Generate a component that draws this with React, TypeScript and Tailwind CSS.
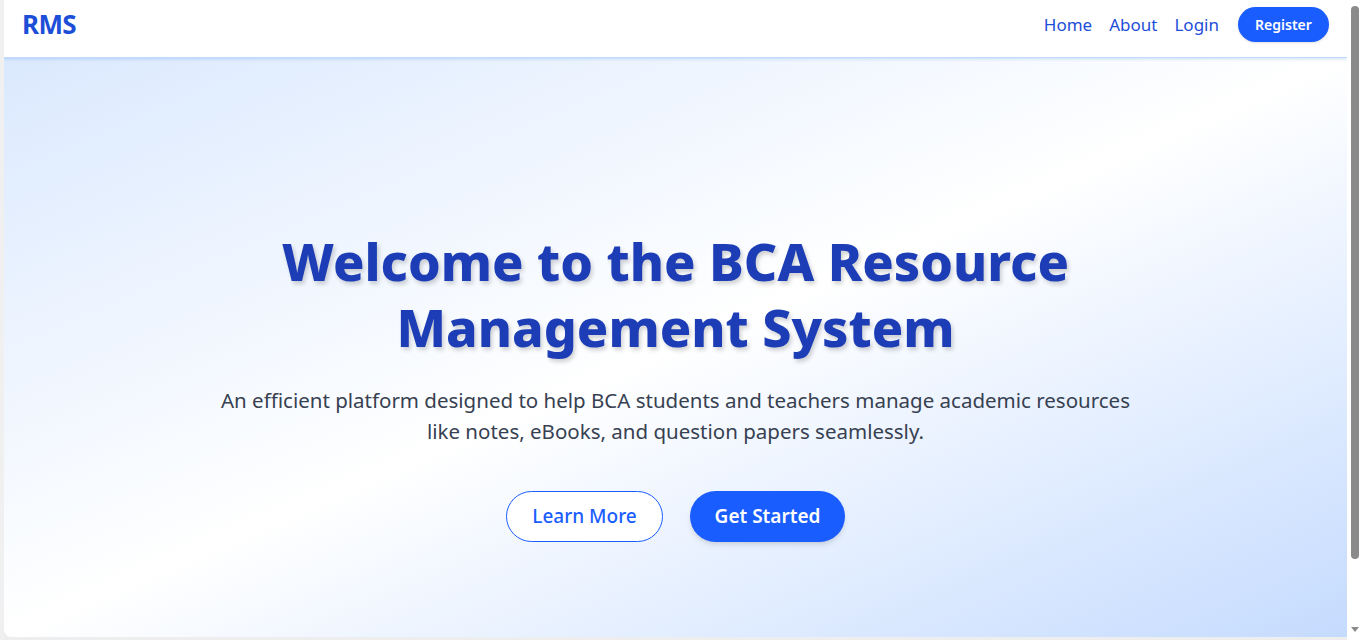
import React from "react";

export default function App() {
  return (
    <div className="w-[1362px] h-[640px] overflow-hidden bg-[#eeeeee] flex" style={{ fontFamily: '"Noto Sans", "Open Sans", sans-serif' }}>
      <div className="w-[4px] shrink-0 bg-[#f0f0f0]" />
      <div className="flex-1 flex flex-col h-[637px] rounded-bl-[8px] overflow-hidden bg-white">
        <nav className="h-[58px] shrink-0 bg-white border-b border-[#bfdbfe] shadow-[0_1px_3px_rgba(59,130,246,0.25)] flex items-start justify-between pl-[18px] pr-[18px] pt-[7px] relative z-10">
          <div className="text-[26px] leading-[35px] font-bold text-[#1d4ed8] tracking-tight">RMS</div>
          <div className="flex items-center gap-[17px] text-[17px] text-[#1d4ed8]">
            <a className="cursor-pointer">Home</a>
            <a className="cursor-pointer">About</a>
            <a className="cursor-pointer">Login</a>
            <button className="ml-[2px] h-[35px] w-[91px] rounded-full bg-[#1a5dff] text-white text-[14px] font-semibold shadow-sm">Register</button>
          </div>
        </nav>
        <main className="flex-1 bg-gradient-to-br from-[#dbe9fe] via-white to-[#c5dbfe] flex flex-col items-center pt-[170px] text-center">
          <h1 className="text-[52px] leading-[66px] font-extrabold text-[#1c3db5] max-w-[820px] [text-shadow:2px_3px_4px_rgba(0,0,0,0.18)]">
            Welcome to the BCA Resource Management System
          </h1>
          <p className="mt-[25px] text-[20.5px] leading-[31px] text-[#374151] max-w-[935px]">
            An efficient platform designed to help BCA students and teachers manage academic resources like notes, eBooks, and question papers seamlessly.
          </p>
          <div className="mt-[44px] flex gap-[27px]">
            <button className="h-[51px] w-[157px] rounded-full border border-[#1a5dff] bg-white text-[#1a5dff] text-[19px] font-medium">Learn More</button>
            <button className="h-[51px] w-[155px] rounded-full bg-[#1a5dff] text-white text-[19px] font-semibold shadow-md">Get Started</button>
          </div>
        </main>
      </div>
      <div className="w-[15px] shrink-0 bg-white flex flex-col items-center relative">
        <div className="mt-[6px] w-[8px] h-[553px] rounded-full bg-[#8a8a8a]" />
        <div className="absolute bottom-[8px] w-0 h-0 border-l-[4px] border-r-[4px] border-t-[5px] border-l-transparent border-r-transparent border-t-[#8a8a8a]" />
      </div>
    </div>
  );
}
